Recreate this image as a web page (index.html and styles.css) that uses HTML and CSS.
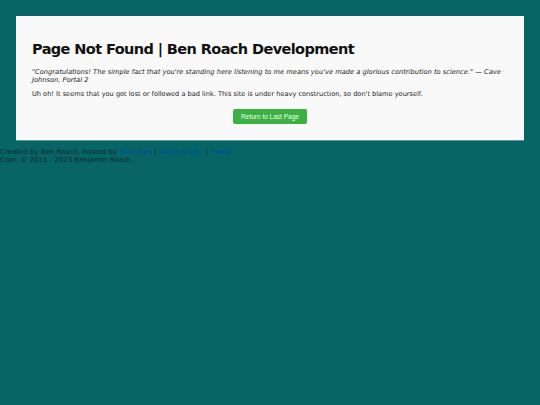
FILE: index.html
```html
<!DOCTYPE html>
<html lang="en">
<head>
<meta charset="utf-8">
<title>Page Not Found | Ben Roach Development</title>
<link rel="stylesheet" href="styles.css">
</head>
<body>
<main class="card">
  <h1 class="title">Page Not Found | Ben Roach Development</h1>
  <p class="quote">"Congratulations! The simple fact that you're standing here listening to me means you've made a glorious contribution to science." — Cave Johnson, Portal 2</p>
  <p class="text">Uh oh! It seems that you got lost or followed a bad link. This site is under heavy construction, so don't blame yourself.</p>
  <div class="actions"><a class="btn" href="#">Return to Last Page</a></div>
</main>
<footer class="footer">
  <div>Created by Ben Roach, hosted by <a href="#">Neocities</a> | <a href="#">Terms of Use</a> | <a href="#">Home</a></div>
  <div>Copr. © 2015 - 2023 Benjamin Roach.</div>
</footer>
</body>
</html>
```
FILE: styles.css
```css
html, body {
  margin: 0;
  padding: 0;
  background: #076565;
  font-family: "DejaVu Sans", Verdana, sans-serif;
}
.card {
  margin: 16px 16px 0;
  background: #f9f9f9;
  padding: 25px 16px 16px;
  border-bottom: 1px solid #5c9a9a;
  height: 83px;
}
.title {
  margin: 0 0 10px;
  font-size: 14.5px;
  letter-spacing: -0.6px;
  font-weight: bold;
  color: #111;
  line-height: 17px;
}
.quote {
  margin: 0 0 6px;
  font-size: 6.7px;
  font-style: italic;
  line-height: 8px;
  color: #222;
}
.text {
  margin: 0 0 11px;
  font-size: 6.6px;
  line-height: 8px;
  color: #222;
}
.actions {
  display: flex;
  justify-content: center;
}
.btn {
  display: block;
  width: 74px;
  height: 15px;
  line-height: 15px;
  text-align: center;
  background: #3cb043;
  border-radius: 2px;
  color: #f0fff0;
  text-decoration: none;
  font-family: "Liberation Sans", Arial, sans-serif;
  font-size: 6.5px;
}
.footer {
  padding-top: 7px;
  font-size: 7px;
  line-height: 8px;
  color: #0a2a2a;
}
.footer a {
  color: #004fa0;
  text-decoration: none;
}
```
